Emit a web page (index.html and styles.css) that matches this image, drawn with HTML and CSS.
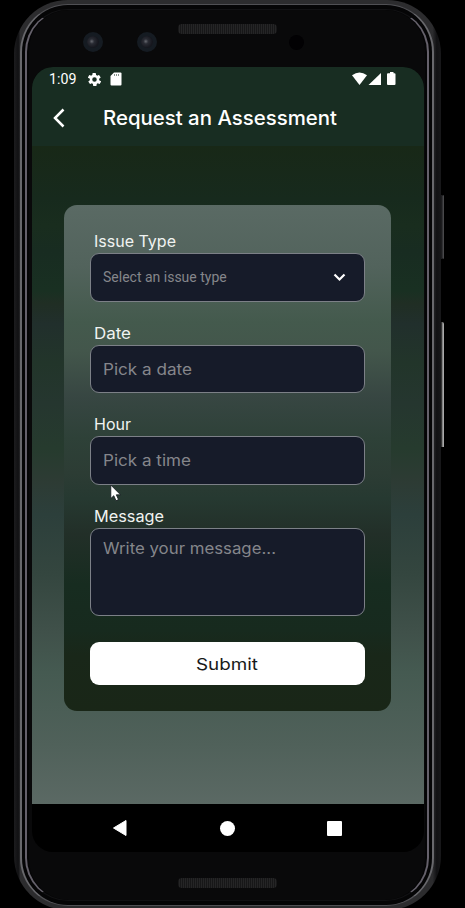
FILE: index.html
```html
<!DOCTYPE html>
<html lang="en">
<head>
<meta charset="utf-8">
<title>Request an Assessment</title>
<link rel="stylesheet" href="styles.css">
</head>
<body>
<div class="stage">
  <i class="side-key power"></i>
  <i class="side-key volume"></i>
  <div class="phone"><div class="rim"><div class="groove"><div class="bezel">
    <div class="bezel-top">
      <i class="lens lens-a"></i><i class="lens lens-b"></i>
      <i class="speaker"></i><i class="sensor"></i>
    </div>
    <div class="screen">
      <header class="top">
        <div class="status">
          <span class="clock">1:09</span>
          <svg class="gear" width="13" height="13" viewBox="2 2 20 20"><path fill="#fff" fill-rule="evenodd" d="M19.1 13a7 7 0 0 0 0-2l2.1-1.6a.6.6 0 0 0 .1-.7l-2-3.4a.6.6 0 0 0-.7-.2l-2.4 1a7 7 0 0 0-1.8-1L14 2.500a.5.5 0 0 0-.5-.5h-4a.5.5 0 0 0-.5.5l-.4 2.600a7 7 0 0 0-1.700 1l-2.400-1a.6.6 0 0 0-.7.2l-2 3.400a.6.6 0 0 0 .1.700L4.900 11a7 7 0 0 0 0 2l-2.100 1.600a.6.6 0 0 0-.1.700l2 3.400c.1.200.4.300.7.200l2.400-1a7 7 0 0 0 1.800 1l.4 2.600c0 .3.2.5.5.5h4c.3 0 .5-.2.5-.5l.4-2.600a7 7 0 0 0 1.700-1l2.400 1c.3.100.6 0 .7-.2l2-3.400a.6.6 0 0 0-.1-.7zM12 15.500a3.500 3.500 0 1 1 0-7 3.500 3.500 0 0 1 0 7z"/></svg>
          <svg class="sd" width="12" height="14" viewBox="0 0 12 14"><path fill="#fff" d="M4 .5h6.500q1 0 1 1v11q0 1-1 1h-9q-1 0-1-1V4z"/><path stroke="#87938d" d="M4.500 2v2M6.500 2v2M8.500 2v2"/></svg>
          <span class="signals">
            <svg width="45" height="14" viewBox="0 0 45 14" fill="#fff"><path d="M0 3.200Q7.500-2.200 15 3.200L7.500 13z"/><path d="M29 1v12H16.500z"/><path d="M38 1.200V0h3.500v1.200h1q1 0 1 1V12q0 1-1 1h-6.500q-1 0-1-1V2.200q0-1 1-1z"/></svg>
          </span>
        </div>
        <div class="title-bar">
          <svg width="12" height="20" viewBox="0 0 12 20"><path d="M10.500 1.500L2 10l8.500 8.500" fill="none" stroke="#fff" stroke-width="2.500"/></svg>
          <h1><svg width="236" height="30"><text x="0" y="22" textLength="234" lengthAdjust="spacingAndGlyphs">Request an Assessment</text></svg></h1>
        </div>
      </header>
      <main>
        <form class="card">
          <div class="field"><label><svg width="90" height="22"><text x="0" y="16" textLength="82" lengthAdjust="spacingAndGlyphs">Issue Type</text></svg></label>
            <div class="box select"><span>Select an issue type</span><svg width="13" height="9" viewBox="0 0 13 9"><path d="M1.500 1.500l5 5 5-5" fill="none" stroke="#fff" stroke-width="2.200"/></svg></div></div>
          <div class="field"><label><svg width="90" height="22"><text x="0" y="16" textLength="37" lengthAdjust="spacingAndGlyphs">Date</text></svg></label>
            <div class="box"><svg width="180" height="24"><text x="0" y="18" textLength="89" lengthAdjust="spacingAndGlyphs">Pick a date</text></svg></div></div>
          <div class="field"><label><svg width="90" height="22"><text x="0" y="16" textLength="37" lengthAdjust="spacingAndGlyphs">Hour</text></svg></label>
            <div class="box"><svg width="180" height="24"><text x="0" y="18" textLength="88" lengthAdjust="spacingAndGlyphs">Pick a time</text></svg></div></div>
          <div class="field"><label><svg width="90" height="22"><text x="0" y="16" textLength="70" lengthAdjust="spacingAndGlyphs">Message</text></svg></label>
            <div class="box area"><svg width="180" height="24"><text x="0" y="17" textLength="173" lengthAdjust="spacingAndGlyphs">Write your message...</text></svg></div></div>
          <button class="submit" type="button"><svg width="66" height="24"><text x="1" y="18" textLength="62" lengthAdjust="spacingAndGlyphs">Submit</text></svg></button>
        </form>
      </main>
      <nav>
        <svg width="15" height="18" viewBox="0 0 15 18"><path d="M14 1.500v15L1.500 9z" fill="#fff" stroke="#fff" stroke-linejoin="round"/></svg>
        <i class="home"></i><i class="recent"></i>
      </nav>
    </div>
    <i class="speaker low"></i>
  </div></div></div></div>
  <svg class="pointer" width="12" height="18" viewBox="0 0 12 18"><path d="M.8 1v13.500l3-2.800 2.200 5 2.500-1.100-2.200-4.800h4.200z" fill="#fff" stroke="#10151c" stroke-width=".8"/></svg>
</div>
</body>
</html>
```
FILE: styles.css
```css
* { box-sizing: border-box; }
body { margin: 0; background: #000; font-family: Inter, sans-serif; }
svg { display: block; }
.stage { position: relative; width: 465px; height: 908px; overflow: hidden; padding-left: 14px; }
.side-key { position: absolute; left: 441px; width: 3px; }
.power { top: 195px; height: 64px; background: #303033; border: 1px solid #1c1c1e; border-right-color: #48484a; }
.volume { top: 322px; height: 125px; background: linear-gradient(90deg, #333 30%, #aaa 60%); border-radius: 0 2px 0 0; }
.phone { position: relative; width: 427px; height: 910px; border-radius: 54px; padding: 4px 7px 4px 6px; background: linear-gradient(90deg, #1c1c1e 0, #111113 1%, #2c2c2e 1.5%, #2c2c2e 98%, #111113 99%, #18181a 100%); }
.rim { height: 100%; border: 2px solid #68686c; border-top: 1px solid #505054; border-bottom: 1px solid #505054; border-radius: 48px; padding: 4px 3px; background: #050506; }
.groove { height: 100%; border: 2px solid #65616b; border-top: 1px solid #111113; border-bottom: 1px solid #111113; border-radius: 43px; padding: 0 2px; background: #050506; }
.bezel { height: 100%; border-radius: 40px; padding: 0 0 0 1px; background: #09090a; }
.bezel-top { position: relative; height: 57px; }
.lens { position: absolute; top: 22px; width: 20px; height: 20px; border: 4px solid #151b22; border-radius: 50%; background: radial-gradient(circle at 40% 45%, #66686f 0, #292b33 25%, #16171e 65%); }
.lens-a { left: 53px; }
.lens-b { left: 107px; }
.speaker { position: absolute; left: 148px; top: 14px; width: 99px; height: 10px; border-radius: 4px; background: repeating-linear-gradient(90deg, #171718 0 1px, #252526 1px 2px); }
.sensor { position: absolute; left: 259px; top: 25px; width: 15px; height: 15px; border-radius: 50%; background: #020103; }
.screen { width: 392px; height: 785px; margin-left: 2px; border-radius: 21px; overflow: hidden; background: #000; display: flex; flex-direction: column; }
.top { height: 79px; background: #182d22; }
.status { display: flex; align-items: center; height: 24px; padding: 0 27px 0 17px; color: #fff; }
.clock { width: 39px; font: 14.200px Roboto, sans-serif; }
.sd { margin-left: 9px; }
.signals { margin-left: auto; }
.title-bar { display: flex; align-items: center; height: 54px; padding-left: 21px; }
h1 { margin: 0 0 0 38px; }
h1 text { font: 500 20px Inter; fill: #fff; }
main { height: 658px; padding: 59px 32px 0; background: linear-gradient(180deg, #182817 0%, #172a1d 8%, #192d1e 12%, #182c21 16%, #193022 22%, #202e24 24%, #212f2c 27%, #22352a 33%, #25362f 39%, #263b2e 46%, #2d3b34 51%, #2c3f3b 56%, #34463f 65%, #40514a 74%, #455a51 80%, #50615a 91%, #5b6964 100%); }
.card { width: 327px; height: 506px; border-radius: 13px; padding: 26px 26px 0; background: linear-gradient(180deg, #5a6a64 0%, #52635c 12%, #445a4d 23%, #43564b 29%, #374642 38%, #2e4138 46%, #2c3c34 53%, #263931 58%, #222f28 65%, #172c20 75%, #172a1e 84%, #192719 89%, #192617 100%); }
.field { margin-bottom: 21px; }
label { display: block; height: 22px; padding-left: 4px; }
label text { font: 15.500px Inter; fill: #f0f3f1; }
.box { display: flex; align-items: center; height: 48.500px; padding: 0 18px 0 12px; border: 1px solid #7c8087; border-radius: 9px; background: #161b29; }
.box text { font: 15.500px Inter; fill: #85868b; }
.select { justify-content: space-between; color: #85868b; font: 14px Roboto, sans-serif; }
.area { height: 88.500px; align-items: flex-start; padding-top: 8px; }
.submit { display: flex; align-items: center; justify-content: center; width: 275px; height: 43px; margin-top: 26px; padding: 0; border: 0; border-radius: 9px; background: #fff; }
.submit text { font: 16.500px Inter; fill: #181a19; }
nav { flex: 1; display: flex; align-items: center; justify-content: space-between; padding: 0 82px 0 80px; }
.home { width: 15px; height: 15px; border-radius: 50%; background: #fff; }
.recent { width: 15px; height: 15px; border-radius: 1px; background: #fff; }
.low { top: 878px; left: 164px; }
.pointer { position: absolute; left: 110px; top: 484px; }
```
